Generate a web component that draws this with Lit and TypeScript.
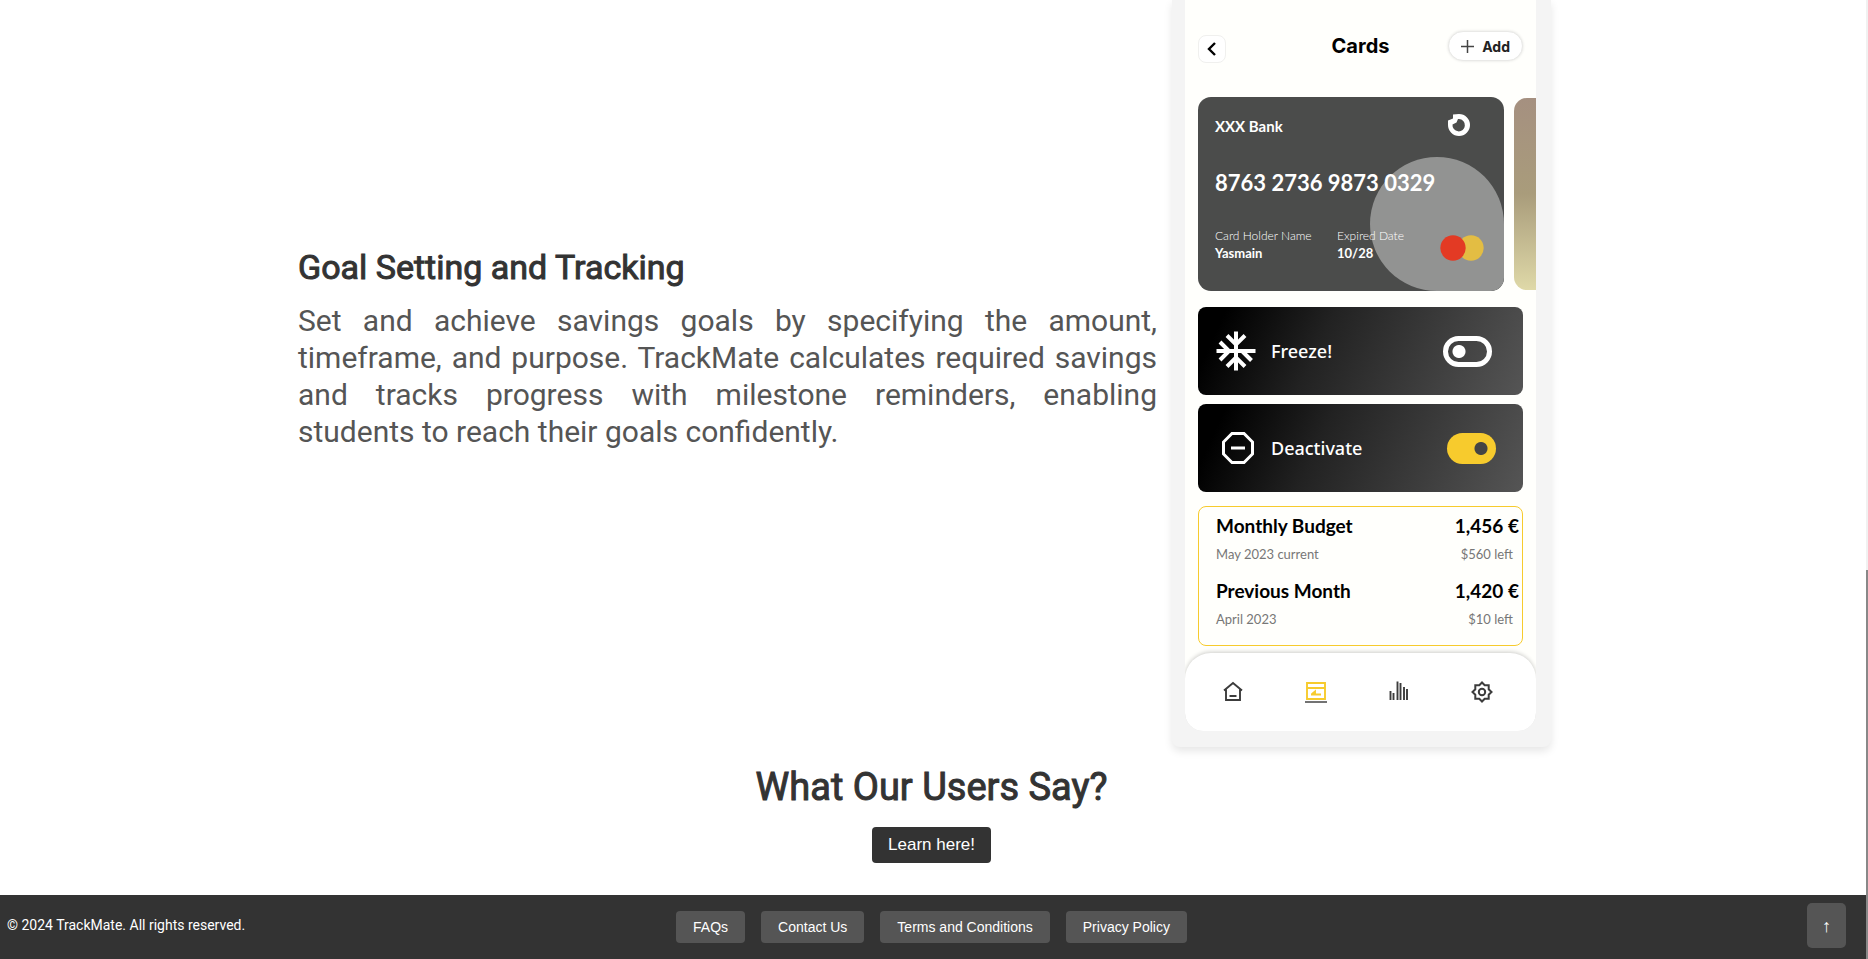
import { LitElement, html, css, svg } from "lit";
import { customElement } from "lit/decorators.js";

const snowflake = svg`
  <path d="M20 0.500v39M0.500 20h39M11 4.500L20 13.500L29 4.500M11 35.500L20 26.500L29 35.500M4 11L13 20L4 29M26 20L35.500 29.500" fill="none" stroke="#fff" stroke-width="4" />`;

/** The phone mock-up that shows the cards screen. */
@customElement("phone-cards")
export class PhoneCards extends LitElement {
  static styles = css`
    :host {
      display: block;
      flex: 0 0 351px;
      min-width: 0;
      box-sizing: content-box;
      padding: 0 15px 16px 13px;
      background: #f4f4f4;
      border-radius: 0 0 8px 8px;
      box-shadow: 0 4px 8px rgba(0, 0, 0, 0.1);
      font-family: Lato, "Open Sans", sans-serif;
      color: #000;
    }
    svg { display: block; }
    button { font: inherit; color: inherit; padding: 0; cursor: pointer; }
    .screen { background: #fffffc; overflow: hidden; border-radius: 0 0 18px 18px; }
    .top {
      display: grid;
      grid-template-columns: 1fr auto 1fr;
      align-items: start;
      padding: 31px 13px 0;
      font-family: Inter, sans-serif;
    }
    .back {
      width: 28px;
      height: 28px;
      margin-top: 4px;
      display: grid;
      place-items: center;
      background: #fff;
      border: 1px solid #f0f0ee;
      border-radius: 8px;
    }
    .title { margin: 0; font-size: 20px; line-height: 30px; font-weight: 700; }
    .add {
      justify-self: end;
      display: flex;
      align-items: center;
      gap: 8px;
      height: 30px;
      padding: 0 12px;
      background: #fff;
      border: 1px solid #e9e9e7;
      border-radius: 15px;
      box-shadow: 0 0 3px rgba(0, 0, 0, 0.12);
      font-size: 14px;
      font-weight: 700;
      color: #222;
    }
    .cards { display: flex; align-items: center; gap: 10px; padding: 34px 0 0 13px; }
    .card {
      position: relative;
      flex: 0 0 306px;
      box-sizing: border-box;
      height: 194px;
      padding: 17px 20px 0 17px;
      border-radius: 13px;
      overflow: hidden;
      background: #4b4c4b;
      color: #fff;
    }
    .glow {
      position: absolute;
      right: 0;
      bottom: 0;
      width: 134px;
      height: 134px;
      border-radius: 50% 50% 13px 50%;
      background: #929392;
    }
    .line { position: relative; display: flex; }
    .bank { justify-content: space-between; padding-right: 14px; font-size: 15px; line-height: 24px; font-weight: 700; }
    .number { margin-top: 31px; font-size: 22px; line-height: 28px; font-weight: 700; }
    .meta { margin-top: 31px; font-size: 12px; line-height: 16px; font-weight: 300; }
    .holder { flex: 0 0 122px; }
    .meta strong { display: block; font-size: 13px; line-height: 18px; font-weight: 700; }
    .logo { margin: 7px 0 0 auto; }
    .next {
      flex: 0 0 40px;
      height: 192px;
      border-radius: 13px;
      background: linear-gradient(#a59080, #a99c7b 50%, #dfd9a8);
    }
    .body { display: grid; gap: 9px; padding: 16px 13px 7px; }
    .row {
      display: flex;
      align-items: center;
      height: 88px;
      box-sizing: border-box;
      padding: 0 27px 0 18px;
      border-radius: 8px;
      background: linear-gradient(115deg, #000 8%, #222 38%, #555);
      color: #fff;
      font: 500 18px/24px "Noto Sans", sans-serif;
    }
    .glyph { flex: 0 0 55px; }
    .switch { margin: 0 0 0 auto; appearance: none; width: 49px; height: 31px; border-radius: 16px; }
    .off {
      border: 5px solid #fff;
      margin-right: 4px;
      background: radial-gradient(circle at 11px 50%, #fff 6px, transparent 7px);
    }
    .on { background: radial-gradient(circle at 34px 50%, #444 6px, #f7cb2d 7px); }
    .budget {
      margin: 5px 0 0;
      padding: 5px 3px 14px 17px;
      border: 1px solid #f7cb2d;
      border-radius: 8px;
      display: grid;
      gap: 11px;
    }
    .entry { display: grid; grid-template-columns: 1fr auto; row-gap: 2px; }
    .name { font-size: 19px; line-height: 28px; font-weight: 700; }
    .sub { font-size: 13px; line-height: 24px; color: #777; }
    .left { text-align: right; padding-right: 6px; }
    .foot { background: linear-gradient(#fffffc 50%, #f4f4f4 50%); }
    .nav {
      display: flex;
      justify-content: space-between;
      padding: 28px 43px 28px 38px;
      background: #fff;
      border-radius: 26px 26px 18px 18px;
      box-shadow: 0 -1px 4px rgba(0, 0, 0, 0.2);
    }
    .nav a { display: block; height: 22px; }
  `;

  render() {
    return html`
      <div class="screen">
        <div class="top">
          <button class="back" aria-label="Back">
            <svg width="10" height="14" viewBox="0 0 10 14"><path d="M8 1L2 7l6 6" fill="none" stroke="#000" stroke-width="2.400" /></svg>
          </button>
          <h3 class="title">Cards</h3>
          <button class="add">
            <svg width="13" height="13" viewBox="0 0 13 13"><path d="M6.500 0v13M0 6.500h13" stroke="#444" stroke-width="1.500" /></svg>
            Add
          </button>
        </div>
        <div class="cards">
          <div class="card">
            <div class="glow"></div>
            <div class="line bank">
              <span>XXX Bank</span>
              <svg width="22" height="22" viewBox="0 0 22 22">
                <path fill-rule="evenodd" fill="#fff" d="M5 0.500L11 0A11 11 0 1 1 0 11V6.500L5 4.500zM10 5L8.500 8.500L4.500 10.500A6.200 6.200 0 1 0 11 5z" />
              </svg>
            </div>
            <div class="line number">8763 2736 9873 0329</div>
            <div class="line meta">
              <span class="holder">Card Holder Name<strong>Yasmain</strong></span>
              <span>Expired Date<strong>10/28</strong></span>
              <svg class="logo" width="44" height="26" viewBox="0 0 44 26">
                <circle cx="31" cy="13" r="12.700" fill="#e3bd43" /><circle cx="13" cy="13" r="12.700" fill="#e33a24" />
              </svg>
            </div>
          </div>
          <div class="next"></div>
        </div>
        <div class="body">
          <label class="row">
            <span class="glyph"><svg width="40" height="40" viewBox="0 0 40 40">${snowflake}</svg></span>
            Freeze!
            <input class="switch off" type="checkbox" role="switch" />
          </label>
          <label class="row">
            <span class="glyph">
              <svg width="44" height="32" viewBox="0 0 44 32"><path d="M16 1.500h12L36.500 10v12L28 30.500H16L7.500 22V10zM15 16h14" fill="none" stroke="#fff" stroke-width="3" /></svg>
            </span>
            Deactivate
            <input class="switch on" type="checkbox" role="switch" checked />
          </label>
          <div class="budget">
            <div class="entry">
              <span class="name">Monthly Budget</span><span class="name">1,456 €</span>
              <span class="sub">May 2023 current</span><span class="sub left">$560 left</span>
            </div>
            <div class="entry">
              <span class="name">Previous Month</span><span class="name">1,420 €</span>
              <span class="sub">April 2023</span><span class="sub left">$10 left</span>
            </div>
          </div>
        </div>
        <div class="foot">
          <nav class="nav">
            <a href="#home" aria-label="Home">
              <svg width="20" height="22" viewBox="0 0 20 22"><path d="M1 9.500L10 2l9 7.500M3 8.500V19h14V8.500M6.500 15h7" fill="none" stroke="#3c3c3c" stroke-width="1.900" /></svg>
            </a>
            <a href="#cards" aria-label="Cards">
              <svg width="22" height="22" viewBox="0 0 22 22"><path d="M2 2h18v16H2zM2 7h18M6 13.500h10M7 13l3-2.500v3" fill="none" stroke="#f7cb2d" stroke-width="1.900" /><path d="M0 21h22" stroke="#444" stroke-width="1.500" /></svg>
            </a>
            <a href="#stats" aria-label="Statistics">
              <svg width="20" height="22" viewBox="0 0 20 22"><path d="M1.500 10v9M4.500 12v7M8.500 0.500V19M11.500 2v17M15 6v13M18 8v11" fill="none" stroke="#3c3c3c" stroke-width="1.900" /></svg>
            </a>
            <a href="#settings" aria-label="Settings">
              <svg width="22" height="22" viewBox="0 0 22 22"><path d="M11 1.500l2.700 2.800h4v4L20.500 11l-2.800 2.700v4h-4L11 20.500l-2.700-2.800h-4v-4L1.500 11l2.800-2.700v-4h4z" fill="none" stroke="#3c3c3c" stroke-width="2" /><circle cx="11" cy="11" r="3.200" fill="none" stroke="#3c3c3c" stroke-width="2" /></svg>
            </a>
          </nav>
        </div>
      </div>
    `;
  }
}

@customElement("app-root")
export class AppRoot extends LitElement {
  static styles = css`
    :host {
      display: grid;
      grid-template-columns: 1fr 2px;
      min-height: 100vh;
      background: #fff;
      font-family: Roboto, sans-serif;
      color: #333;
    }
    .page { display: flex; flex-direction: column; min-width: 0; }
    .track { background: linear-gradient(#f1f1f1 570px, #888 570px); }
    .feature { padding-right: 17px; }
    .inner { display: flex; gap: 15px; max-width: 1253px; margin: 0 auto; }
    .copy { flex: 1; padding-top: 245px; }
    .heading { margin: 0; font-weight: 400; -webkit-text-stroke: 1px #333; }
    .goal { font-size: 34px; line-height: 44px; }
    .text { margin: 13px 0 0; font-size: 30px; line-height: 37px; color: #555; text-align: justify; }
    .users {
      display: flex;
      flex-direction: column;
      align-items: center;
      gap: 16px;
      padding: 16px 3px 32px 0;
    }
    .say { font-size: 38px; line-height: 48px; }
    .learn {
      height: 36px;
      padding: 0 16px;
      border: 0;
      border-radius: 4px;
      background: #333;
      color: #fff;
      font: 17px/20px "Liberation Sans", Arial, sans-serif;
    }
    .footer {
      display: grid;
      grid-template-columns: 1fr auto 1fr;
      align-items: center;
      margin-top: auto;
      padding: 8px 10px 8px 7px;
      background: #333;
      color: #fff;
      font-size: 14px;
      line-height: 20px;
    }
    .legal { margin: 0 0 4px; }
    .links { display: flex; gap: 16px; }
    .link {
      padding: 6px 17px;
      border-radius: 4px;
      background: #555;
      color: #fff;
      text-decoration: none;
      font-family: "Liberation Sans", Arial, sans-serif;
    }
    .up {
      justify-self: end;
      width: 39px;
      height: 45px;
      margin: 0 10px 3px 0;
      padding: 0;
      border: 0;
      border-radius: 5px;
      background: #555;
      color: #fff;
      font: 18px/20px "Liberation Sans", Arial, sans-serif;
    }
  `;

  render() {
    const links = ["FAQs", "Contact Us", "Terms and Conditions", "Privacy Policy"];
    return html`
      <div class="page">
        <section class="feature">
          <div class="inner">
            <div class="copy">
              <h2 class="heading goal">Goal Setting and Tracking</h2>
              <p class="text">
                Set and achieve savings goals by specifying the amount, timeframe, and purpose. TrackMate calculates
                required savings and tracks progress with milestone reminders, enabling students to reach their goals
                confidently.
              </p>
            </div>
            <phone-cards></phone-cards>
          </div>
        </section>
        <section class="users">
          <h2 class="heading say">What Our Users Say?</h2>
          <button class="learn">Learn here!</button>
        </section>
        <footer class="footer">
          <p class="legal">© 2024 TrackMate. All rights reserved.</p>
          <nav class="links">${links.map((name) => html`<a class="link" href="#">${name}</a>`)}</nav>
          <button class="up" aria-label="Back to top">↑</button>
        </footer>
      </div>
      <div class="track"></div>
    `;
  }
}
